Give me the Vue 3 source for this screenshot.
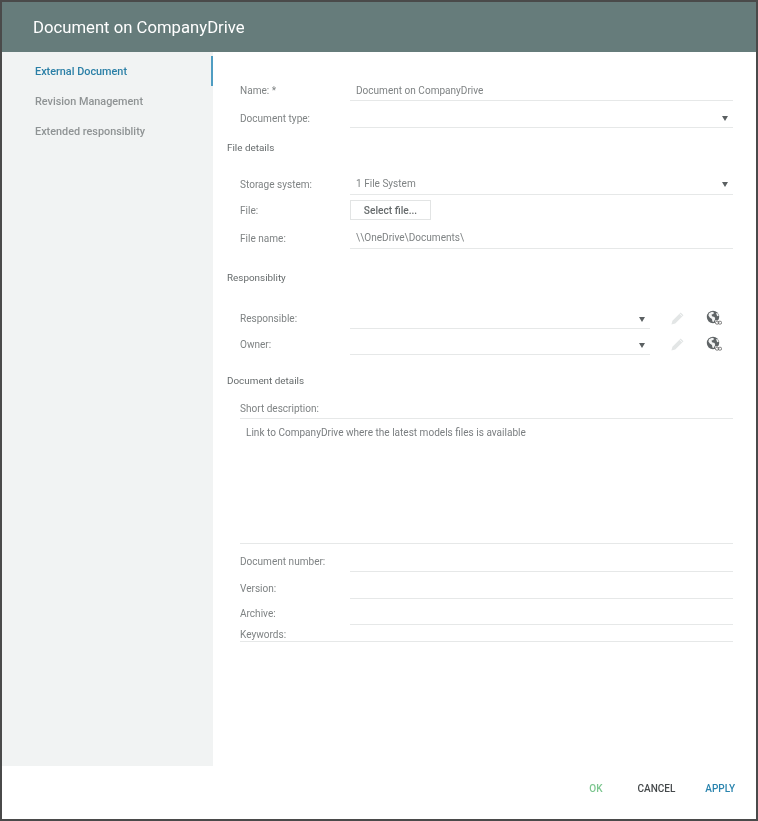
<template>
  <div class="dialog">
    <header class="dialog-header">Document on CompanyDrive</header>

    <div class="dialog-body">
      <nav class="sidebar">
        <a
          v-for="item in navItems"
          :key="item"
          class="nav-item"
          :class="{ active: item === activeItem }"
        >{{ item }}</a>
      </nav>

      <main class="form">
        <div class="row row-name">
          <label>Name: *</label>
          <div class="field">Document on CompanyDrive</div>
        </div>
        <div class="row row-type">
          <label>Document type:</label>
          <div class="field select"><span></span><i class="arrow"></i></div>
        </div>

        <h3 class="section section-file">File details</h3>
        <div class="row row-storage">
          <label>Storage system:</label>
          <div class="field select"><span>1 File System</span><i class="arrow"></i></div>
        </div>
        <div class="row row-file">
          <label>File:</label>
          <div class="file-cell"><button class="select-btn">Select file...</button></div>
        </div>
        <div class="row row-filename">
          <label>File name:</label>
          <div class="field">\\OneDrive\Documents\</div>
        </div>

        <h3 class="section section-resp">Responsiblity</h3>
        <div v-for="person in people" :key="person.label" class="row row-person" :class="person.cls">
          <label>{{ person.label }}</label>
          <div class="field select short"><span></span><i class="arrow"></i></div>
          <div class="tools">
            <svg class="pencil" viewBox="0 0 16 16" width="15" height="15">
              <path d="M11.4 1.6l3 3L5.6 13.4 1.5 14.5l1.1-4.1z" fill="#e3e6e6" />
              <path d="M10.2 2.8l3 3" stroke="#fff" stroke-width="0.8" />
            </svg>
            <svg class="globe" viewBox="0 0 16 16" width="16" height="16">
              <circle cx="7" cy="7" r="6.2" fill="#5f6466" />
              <path d="M3 3.2l3-1.4 2 .6-.6 1.6-1.8.6.4 1.6 2.6.8.6 2-1.6 3-1.2-.4-.4-2.6-2.2-1.4-1.4-2.2z" fill="#f2f3f3" />
              <path d="M10 3l2 .6.8 2.2-1.6.4z" fill="#f2f3f3" />
              <rect x="9" y="10.4" width="7" height="5" fill="#fff" />
              <rect x="9.4" y="11.3" width="3.4" height="2.8" rx="1.3" fill="none" stroke="#666" stroke-width="0.9" />
              <rect x="12.2" y="11.3" width="3.4" height="2.8" rx="1.3" fill="none" stroke="#666" stroke-width="0.9" />
            </svg>
          </div>
        </div>

        <h3 class="section section-doc">Document details</h3>
        <div class="row row-short wide">
          <label>Short description:</label>
        </div>
        <div class="description">Link to CompanyDrive where the latest models files is available</div>
        <div class="row row-number">
          <label>Document number:</label>
          <div class="field"></div>
        </div>
        <div class="row row-version">
          <label>Version:</label>
          <div class="field"></div>
        </div>
        <div class="row row-archive">
          <label>Archive:</label>
          <div class="field"></div>
        </div>
        <div class="row row-keywords wide">
          <label>Keywords:</label>
        </div>
      </main>
    </div>

    <footer class="dialog-footer">
      <button class="action ok">OK</button>
      <button class="action cancel">CANCEL</button>
      <button class="action apply">APPLY</button>
    </footer>
  </div>
</template>

<script setup>
const navItems = ["External Document", "Revision Management", "Extended responsiblity"];
const activeItem = "External Document";
const people = [
  { label: "Responsible:", cls: "row-responsible" },
  { label: "Owner:", cls: "row-owner" },
];
</script>

<style scoped>
.dialog {
  width: 758px;
  height: 821px;
  box-sizing: border-box;
  border: 2px solid #4a4a4a;
  display: flex;
  flex-direction: column;
  background: #fff;
  font-family: Roboto, "Liberation Sans", sans-serif;
  font-size: 10.05px;
  color: #7f8384;
  filter: blur(0.3px);
}

.dialog-header {
  height: 50px;
  flex: none;
  box-sizing: border-box;
  padding-left: 31px;
  line-height: 51px;
  font-size: 16.7px;
  color: #fff;
  background: #667c7b;
}

.dialog-body {
  flex: none;
  height: 714px;
  display: flex;
}

.sidebar {
  width: 211px;
  flex: none;
  box-sizing: border-box;
  padding-top: 4px;
  background: #f1f3f3;
}

.nav-item {
  display: block;
  height: 30px;
  line-height: 32px;
  padding-left: 33px;
  font-size: 10.85px;
  font-weight: 500;
  color: #8f9394;
  border-right: 2px solid transparent;
}

.nav-item.active {
  color: #2a7fa6;
  border-right-color: #4f9dc2;
}

.form {
  flex: 1;
  box-sizing: border-box;
  padding: 27px 23px 0 14px;
}

.section {
  margin: 0;
  font-size: 9.9px;
  font-weight: 400;
  line-height: 14px;
  color: #666b6c;
}

.section-file { padding: 13px 0 11px; }
.section-resp { padding: 22px 0 20px; }
.section-doc { padding: 19px 0 9px; }

.row {
  display: flex;
  align-items: flex-end;
  margin-left: 13px;
}

.row label {
  width: 110px;
  flex: none;
  line-height: 14px;
  padding-bottom: 3px;
}

.field {
  flex: 1;
  box-sizing: border-box;
  height: 100%;
  display: flex;
  align-items: flex-end;
  padding: 0 0 3px 6px;
  line-height: 14px;
  border-bottom: 1px solid #e6e8e8;
}

.select {
  justify-content: space-between;
  padding-right: 5px;
}

.short {
  flex: none;
  width: 300px;
}

.arrow {
  width: 0;
  height: 0;
  margin-bottom: 3px;
  border-left: 3.5px solid transparent;
  border-right: 3.5px solid transparent;
  border-top: 5px solid #5b6062;
}

.row-name { height: 22px; }
.row-type { height: 27px; }
.row-storage { height: 29px; }
.row-file { height: 27px; }
.row-filename { height: 27px; }
.row-responsible { height: 24px; }
.row-owner { height: 26px; }
.row-short { height: 22px; }
.row-number { height: 28px; }
.row-version { height: 27px; }
.row-archive { height: 26px; }
.row-keywords { height: 17px; }

.row-name .field,
.row-type label { padding-bottom: 2px; }
.row-file label { padding-bottom: 4px; }
.row-archive label { padding-bottom: 4px; }
.row-storage .arrow { margin-bottom: 4px; }

.wide {
  box-sizing: border-box;
  border-bottom: 1px solid #e6e8e8;
}
.wide label { padding-bottom: 2px; }
.row-keywords.wide label {
  padding-bottom: 0;
  margin-bottom: -1px;
}

.file-cell {
  display: flex;
  align-items: flex-end;
  padding-bottom: 2px;
}

.select-btn {
  width: 81px;
  height: 20px;
  padding: 0;
  font: 500 10.2px Roboto, "Liberation Sans", sans-serif;
  color: #666b6c;
  background: #fff;
  border: 1px solid #e2e4e4;
}

.tools {
  display: flex;
  align-items: center;
  gap: 21px;
  padding: 0 0 3px 20px;
}

.pencil, .globe { display: block; }

.description {
  height: 125px;
  box-sizing: border-box;
  margin-left: 13px;
  padding: 7px 0 0 6px;
  line-height: 14px;
  color: #7a7e80;
  border-bottom: 1px solid #e6e8e8;
}

.dialog-footer {
  flex: 1;
  display: flex;
  justify-content: flex-end;
  align-items: flex-start;
  gap: 30px;
  padding: 16px 21px 0 0;
}

.action {
  padding: 0;
  border: none;
  background: none;
  font: 500 10px/14px Roboto, "Liberation Sans", sans-serif;
  cursor: pointer;
}

.ok { color: #7cc68f; margin-right: 5px; }
.cancel { color: #45494b; }
.apply { color: #2a84ae; }
</style>

<style>
html, body { margin: 0; background: #fff; }
</style>
